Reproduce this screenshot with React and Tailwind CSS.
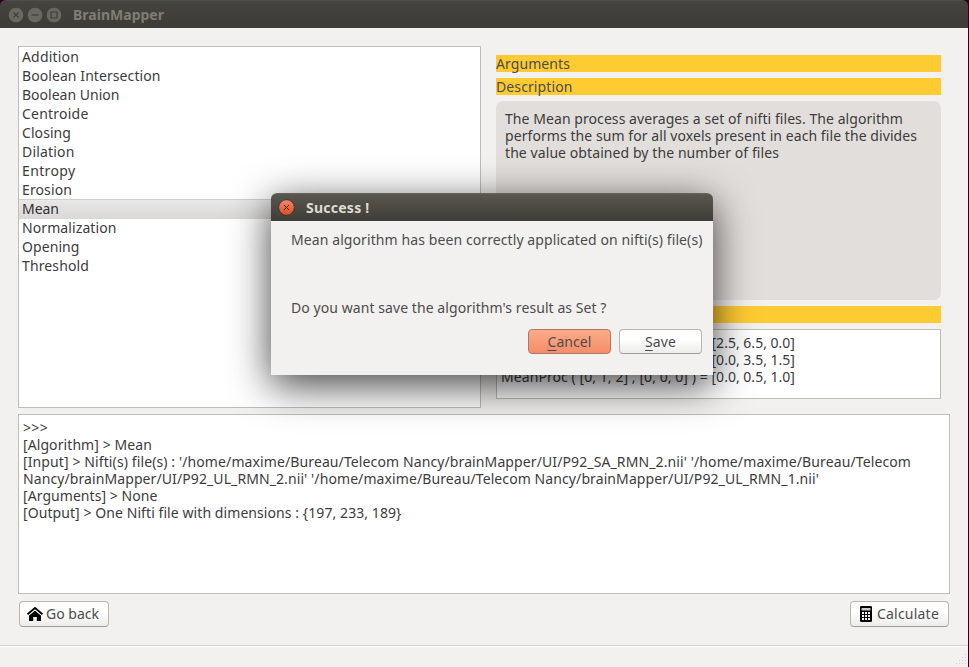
import { useLayoutEffect, useRef, useState } from "react";

// Text run whose tracking is computed so that it fills the given width.
function Fit({ w, children, className = "" }) {
  const ref = useRef(null);
  const [spacing, setSpacing] = useState(0);
  useLayoutEffect(() => {
    const el = ref.current;
    el.style.letterSpacing = "0px";
    const natural = el.getBoundingClientRect().width;
    const value = (w - natural) / el.textContent.length;
    el.style.letterSpacing = value + "px";
    setSpacing(value);
  }, [w]);
  return (
    <span ref={ref} className={"inline-block shrink-0 whitespace-pre " + className} style={{ letterSpacing: spacing + "px" }}>
      {children}
    </span>
  );
}

const algorithms = [
  ["Addition", 57],
  ["Boolean Intersection", 138.5],
  ["Boolean Union", 97.5],
  ["Centroide", 66.5],
  ["Closing", 49],
  ["Dilation", 52.5],
  ["Entropy", 53.5],
  ["Erosion", 50],
  ["Mean", 37],
  ["Normalization", 94.5],
  ["Opening", 57.5],
  ["Threshold", 67],
];

const log = [
  [">>>", 25],
  ["[Algorithm] > Mean", 129],
  ["[Input] > Nifti(s) file(s) : '/home/maxime/Bureau/Telecom Nancy/brainMapper/UI/P92_SA_RMN_2.nii' '/home/maxime/Bureau/Telecom", 888],
  ["Nancy/brainMapper/UI/P92_UL_RMN_2.nii' '/home/maxime/Bureau/Telecom Nancy/brainMapper/UI/P92_UL_RMN_1.nii'", 796],
  ["[Arguments] > None", 134.5],
  ["[Output] > One Nifti file with dimensions : {197, 233, 189}", 378.5],
];

function WindowButton({ children }) {
  return (
    <svg width="16" height="16" viewBox="0 0 16 16" fill="none" stroke="#3b3a36" strokeWidth="1.1">
      <circle cx="8" cy="8" r="7.7" fill="#6a6860" stroke="#35342f" strokeWidth="0.5" />
      {children}
    </svg>
  );
}

function Button({ className = "", children }) {
  return (
    <button
      className={
        "flex h-[26px] items-center rounded-[4px] border border-[#b9b6b1] border-b-[#a09d98] bg-linear-to-b from-white from-40% to-[#ececea] text-[#4c4c4c] " +
        className
      }
    >
      {children}
    </button>
  );
}

function Heading({ children }) {
  return <div className="h-[17px] shrink-0 bg-[#ffcb33] leading-[18px] text-[#4c4c4c]">{children}</div>;
}

export default function App() {
  return (
    <div className="relative flex h-[667px] w-[969px] flex-col overflow-hidden border-r border-[#2c001e] bg-[#f2f1ef] font-['Noto_Sans',sans-serif] text-[14px] leading-[17px] text-[#3c3c3c]">
      <div className="h-7 shrink-0 bg-[#2c001e]">
        <header className="flex h-7 items-center gap-[3px] rounded-t-[6px] border-t border-[#504e48] bg-linear-to-b from-[#45443f] to-[#3c3b37] pl-[7.5px]">
          <WindowButton><path d="M5.3 5.3l5.4 5.4m0-5.4l-5.4 5.4" /></WindowButton>
          <WindowButton><path d="M4.5 8h7" /></WindowButton>
          <WindowButton><path d="M5 5h6v6h-6z" /></WindowButton>
          <Fit w={91} className="-mt-px ml-[8.5px] font-bold text-[#807d74]">BrainMapper</Fit>
        </header>
      </div>

      <main className="flex h-[617px] shrink-0 flex-col pt-[18px] pr-[18px] pl-[18px]">
        <div className="flex h-[362px] shrink-0 gap-[15px]">
          <ul className="w-[463px] border border-[#bfbdb8] bg-white pt-px">
            {algorithms.map(([name, w]) => (
              <li
                key={name}
                className={
                  "h-[19px] pl-[3px] leading-[18px] " +
                  (name === "Mean"
                    ? "bg-linear-to-b from-[#e9e8e7] to-[#d9d8d6] text-[#303030] shadow-[0_-1px_0_#d0cfcd]"
                    : "")
                }
              >
                <Fit w={w}>{name}</Fit>
              </li>
            ))}
          </ul>
          <section className="flex w-[445px] flex-col gap-[6px] pt-[9px]">
            <Heading><Fit w={74}>Arguments</Fit></Heading>
            <Heading><Fit w={76.5}>Description</Fit></Heading>
            <div className="flex h-[199px] shrink-0 flex-col items-start rounded-[7px] bg-[#e2dedb] pt-[9px] pl-[9px]">
              <Fit w={398}>The Mean process averages a set of nifti files. The algorithm</Fit>
              <Fit w={412}>performs the sum for all voxels present in each file the divides</Fit>
              <Fit w={274}>the value obtained by the number of files</Fit>
            </div>
            <Heading />
            <div className="flex h-[70px] shrink-0 flex-col items-start border border-[#bfbdb8] bg-white pt-[4px] pl-[4px]">
              <Fit w={83.5} className="ml-[210.5px]">[2.5, 6.5, 0.0]</Fit>
              <Fit w={83.5} className="ml-[210.5px]">[0.0, 3.5, 1.5]</Fit>
              <div className="flex">
                <Fit w={210.5}>{"MeanProc ( [0, 1, 2] , [0, 0, 0] ) = "}</Fit>
                <Fit w={83.5}>[0.0, 0.5, 1.0]</Fit>
              </div>
            </div>
          </section>
        </div>

        <div className="mt-[6px] flex h-[180px] w-[932px] shrink-0 flex-col items-start border border-[#bfbdb8] bg-white pt-[4px] pl-[4px]">
          {log.map(([text, w]) => (
            <Fit key={text} w={w}>{text}</Fit>
          ))}
        </div>

        <div className="mt-[7px] flex w-[932px] justify-between px-px">
          <Button className="w-[90px] pl-[7px]">
            <svg width="16" height="16" viewBox="0 0 16 16" className="mr-[3px]">
              <path d="M8 4.6L14 9.4V15H9.8V11H6.2V15H2V9.4z" fill="#000" />
              <path d="M.5 8.3L8 2l7.5 6.3" fill="none" stroke="#000" strokeWidth="2" />
              <path d="M1.5 9.4L8 4l6.5 5.4" fill="none" stroke="#fff" strokeWidth="0.7" />
            </svg>
            <Fit w={53} className="-mt-[2px]">Go back</Fit>
          </Button>
          <Button className="w-[99px] pl-[9px]">
            <svg width="12" height="16" viewBox="0 0 12 16" className="-mt-px mr-[5px]">
              <rect width="12" height="16" rx="1.3" fill="#000" />
              <path d="M1.5 2h9v2.5h-9z" fill="#c9c9c9" />
              <path d="M2 6h2v2H2zM5 6h2v2H5zM8 6h2v2H8zM2 9h2v2H2zM5 9h2v2H5zM8 9h2v2H8zM2 12h2v2H2zM5 12h2v2H5zM8 12h2v2H8z" fill="#fff" />
            </svg>
            <Fit w={62} className="-mt-[2px]">Calculate</Fit>
          </Button>
        </div>
      </main>

      <footer className="flex flex-1 items-end justify-end border-t border-[#d4d2cf] pr-[1px] pb-[2px] shadow-[inset_0_1px_0_#fff]">
        <svg width="12" height="12" viewBox="0 0 12 12" fill="#d0cecb">
          <path d="M10 1h1v1h-1zM7 4h1v1h-1zM10 4h1v1h-1zM4 7h1v1h-1zM7 7h1v1h-1zM10 7h1v1h-1zM1 10h1v1h-1zM4 10h1v1h-1zM7 10h1v1h-1zM10 10h1v1h-1z" />
        </svg>
      </footer>

      <div
        role="dialog"
        className="absolute top-[193px] left-[271px] flex h-[182px] w-[442px] flex-col rounded-t-[6px] bg-[#f2f1ef] text-[#4c4c4c] shadow-[0_10px_40px_rgba(0,0,0,0.75)]"
      >
        <div className="flex h-7 shrink-0 items-center rounded-t-[6px] border-t border-[#66645a] bg-linear-to-b from-[#59574e] to-[#3e3d38] pl-[7px]">
          <svg width="17" height="17" viewBox="0 0 17 17">
            <defs>
              <linearGradient id="close" x1="0" y1="0" x2="0" y2="1">
                <stop offset="0" stopColor="#f58a68" />
                <stop offset="1" stopColor="#df4d1d" />
              </linearGradient>
            </defs>
            <circle cx="8.5" cy="8.5" r="7.8" fill="url(#close)" stroke="#35342f" strokeWidth="0.8" />
            <path d="M5.9 5.9l5.2 5.2m0-5.2l-5.2 5.2" stroke="#3b2a22" strokeWidth="1" />
          </svg>
          <Fit w={63.5} className="-mt-px ml-[11px] font-bold text-[#dfdbd2]">Success !</Fit>
        </div>
        <div className="flex flex-col items-start pt-[10px] pl-5">
          <Fit w={411.5}>Mean algorithm has been correctly applicated on nifti(s) file(s)</Fit>
          <Fit w={315.5} className="mt-[51px]">Do you want save the algorithm's result as Set ?</Fit>
        </div>
        <div className="mt-[13px] flex justify-end gap-2 pr-[11px]">
          <button className="h-[25px] w-[83px] rounded-[4px] border border-[#b0766a] bg-linear-to-b from-[#fcab8a] to-[#f58d68]">
            <Fit w={44}><span className="underline underline-offset-[3px]">C</span>ancel</Fit>
          </button>
          <button className="h-[25px] w-[83px] rounded-[4px] border border-[#b9b6b1] border-b-[#a09d98] bg-linear-to-b from-white from-40% to-[#ececea]">
            <Fit w={31}><span className="underline underline-offset-[3px]">S</span>ave</Fit>
          </button>
        </div>
      </div>
    </div>
  );
}
